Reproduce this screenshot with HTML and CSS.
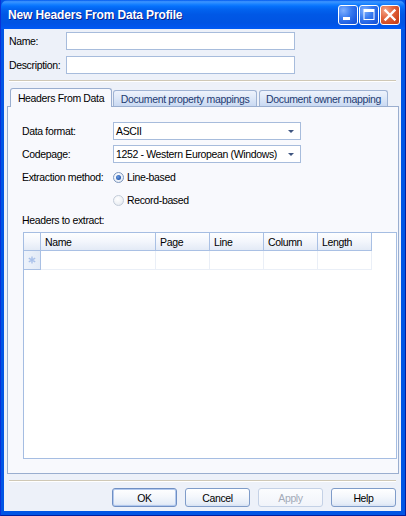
FILE: index.html
```html
<!DOCTYPE html>
<html>
<head>
<meta charset="utf-8">
<title>New Headers From Data Profile</title>
<link rel="stylesheet" href="styles.css">
</head>
<body>
<div class="window">
  <div class="titlebar">
    <span class="title">New Headers From Data Profile</span>
    <div class="caption-buttons">
      <span class="cbtn">
        <svg width="20" height="20" viewBox="0 0 20 20"><rect x="5" y="12" width="7" height="3" fill="#fff"/></svg>
      </span>
      <span class="cbtn">
        <svg width="20" height="20" viewBox="0 0 20 20"><rect x="5" y="4.5" width="10" height="10" fill="none" stroke="#fff" stroke-width="1"/><rect x="5" y="4" width="10" height="3" fill="#fff"/></svg>
      </span>
      <span class="cbtn close">
        <svg width="20" height="20" viewBox="0 0 20 20"><path d="M5.5 5.5 L14.5 14.5 M14.5 5.5 L5.5 14.5" stroke="#fff" stroke-width="2.4" stroke-linecap="square"/></svg>
      </span>
    </div>
  </div>
  <div class="client">
    <div class="fields">
      <div class="field-row"><span class="field-label">Name:</span><span class="textbox"></span></div>
      <div class="field-row"><span class="field-label">Description:</span><span class="textbox"></span></div>
    </div>
    <div class="separator"></div>
    <div class="tab-strip">
      <div class="tab active">Headers From Data</div>
      <div class="tab t2">Document property mappings</div>
      <div class="tab t3">Document owner mapping</div>
    </div>
    <div class="tab-panel">
      <div class="prop-row">
        <span class="prop-label">Data format:</span>
        <span class="combo"><span class="combo-text">ASCII</span><span class="combo-arrow"></span></span>
      </div>
      <div class="prop-row">
        <span class="prop-label">Codepage:</span>
        <span class="combo"><span class="combo-text">1252 - Western European (Windows)</span><span class="combo-arrow"></span></span>
      </div>
      <div class="prop-row">
        <span class="prop-label">Extraction method:</span>
        <span class="radio checked"></span><span class="radio-text">Line-based</span>
      </div>
      <div class="prop-row">
        <span class="prop-label"></span>
        <span class="radio"></span><span class="radio-text">Record-based</span>
      </div>
      <div class="section-label">Headers to extract:</div>
      <div class="datagrid">
        <div class="grid-row header">
          <div class="cell rowhead"></div>
          <div class="cell">Name</div>
          <div class="cell">Page</div>
          <div class="cell">Line</div>
          <div class="cell">Column</div>
          <div class="cell">Length</div>
          <div class="cell last"></div>
        </div>
        <div class="grid-row newrow">
          <div class="cell rowhead">
            <svg width="8" height="8" viewBox="0 0 8 8"><path d="M4 0.5 V7.5 M0.8 2.2 L7.2 5.8 M7.2 2.2 L0.8 5.8" stroke="#a9c1ea" stroke-width="1.4"/></svg>
          </div>
          <div class="cell"></div>
          <div class="cell"></div>
          <div class="cell"></div>
          <div class="cell"></div>
          <div class="cell"></div>
          <div class="cell empty"></div>
        </div>
      </div>
    </div>
    <div class="separator lower"></div>
    <div class="buttons">
      <span class="btn default">OK</span>
      <span class="btn">Cancel</span>
      <span class="btn disabled">Apply</span>
      <span class="btn">Help</span>
    </div>
  </div>
</div>
</body>
</html>
```
FILE: styles.css
```css
* { box-sizing: border-box; }

html, body {
  margin: 0;
  padding: 0;
  background: #ffffff;
}

body {
  font-family: "Liberation Sans", Arial, sans-serif;
  font-size: 10.5px;
  letter-spacing: -0.35px;
  color: #000;
}

.window {
  width: 406px;
  height: 516px;
  background: #0055e5;
  border-left: 1px solid #0831d9;
  border-right: 1px solid #001ea0;
  border-bottom: 1px solid #001ea0;
  display: flex;
  flex-direction: column;
  padding: 0 4px 4px 3px;
}

.titlebar {
  height: 29px;
  margin: 0 -4px 0 -3px;
  padding: 0 5px 0 7px;
  display: flex;
  align-items: center;
  justify-content: space-between;
  border-radius: 7px 7px 0 0;
  background: linear-gradient(to bottom,
    #0058ee 0%, #3d95ff 6%, #2b8dff 10%, #137dff 16%, #0570fb 22%,
    #0263ef 32%, #0058e6 50%, #0054e3 78%, #0055eb 90%, #005bf5 100%);
}

.title {
  color: #fff;
  font-weight: bold;
  font-size: 12px;
  letter-spacing: -0.15px;
  text-shadow: 1px 1px 0 #0a1e8a;
  padding-top: 1px;
}

.caption-buttons {
  display: flex;
  gap: 1px;
  padding-top: 1px;
}

.cbtn {
  width: 20px;
  height: 20px;
  border: 1px solid #fff;
  border-radius: 3px;
  display: block;
  position: relative;
  overflow: hidden;
  background: radial-gradient(circle at 25% 25%, #7fb0ff 0%, #3a7cf0 40%, #1e5de0 75%, #1450d0 100%);
}

.cbtn svg {
  position: absolute;
  left: -1px;
  top: -1px;
}

.cbtn.close {
  background: radial-gradient(circle at 25% 25%, #f4a68a 0%, #e2663f 40%, #d0471f 75%, #c03a14 100%);
}

.client {
  flex: 1;
  background: #edf1f9;
  display: flex;
  flex-direction: column;
}

.fields {
  display: flex;
  flex-direction: column;
  gap: 6px;
  padding: 3px 0 0 5px;
}

.field-row {
  display: flex;
  align-items: center;
  height: 18px;
}

.field-label {
  width: 57px;
}

.textbox {
  width: 229px;
  height: 18px;
  background: #fff;
  border: 1px solid #a7bcdc;
}

.separator {
  margin: 6px 5px 0 5px;
  height: 2px;
  border-top: 1px solid #cfc8b6;
  border-bottom: 1px solid #ffffff;
}

.tab-strip {
  display: flex;
  align-items: flex-end;
  height: 18px;
  margin-top: 6px;
  padding-left: 6px;
  position: relative;
  z-index: 1;
}

.tab {
  height: 16px;
  border: 1px solid #9fb3d3;
  border-bottom: none;
  border-radius: 3px 3px 0 0;
  background: linear-gradient(to bottom, #eef3fc 0%, #dbe6f7 55%, #c9d9f2 100%);
  color: #1e3b72;
  display: flex;
  align-items: center;
  justify-content: center;
  padding-top: 1px;
}

.tab.active {
  width: 102px;
  height: 19px;
  margin-bottom: -1px;
  background: #f8f9fd;
  color: #000;
  border-color: #9aaecf;
  padding-top: 0;
  padding-bottom: 1px;
}

.tab.t2 {
  width: 144px;
  margin-left: 1px;
}

.tab.t3 {
  width: 129px;
  margin-left: 2px;
}

.tab-panel {
  margin: 0 2px 0 3px;
  height: 368px;
  background: #f8f9fd;
  border: 1px solid #9aaecf;
  display: flex;
  flex-direction: column;
  padding: 15px 1px 14px 14px;
}

.prop-row {
  display: flex;
  align-items: center;
  height: 18px;
  margin-bottom: 5px;
}

.prop-label {
  width: 91px;
  flex: none;
}

.combo {
  width: 188px;
  height: 18px;
  background: #fff;
  border: 1px solid #a7bcdc;
  display: flex;
  align-items: center;
  justify-content: space-between;
  padding: 0 6px 0 2px;
}

.combo-arrow {
  width: 0;
  height: 0;
  border-left: 3px solid transparent;
  border-right: 3px solid transparent;
  border-top: 3px solid #3f5580;
  margin-top: 1px;
}

.radio {
  width: 11px;
  height: 11px;
  border-radius: 50%;
  border: 1px solid #c3ccd9;
  background: radial-gradient(circle at 40% 35%, #ffffff 0%, #eef1f5 60%, #d9dee6 100%);
  flex: none;
  position: relative;
}

.radio.checked {
  border-color: #7e97bd;
  background: radial-gradient(circle at 40% 35%, #ffffff 0%, #e8eef7 70%, #cfdaea 100%);
}

.radio.checked::after {
  content: "";
  position: absolute;
  left: 2px;
  top: 2px;
  width: 5px;
  height: 5px;
  border-radius: 50%;
  background: radial-gradient(circle at 40% 40%, #6c9be0 0%, #2e62b5 60%, #1d4a98 100%);
}

.radio-text {
  margin-left: 3px;
}

.section-label {
  height: 16px;
  line-height: 16px;
  margin-top: -2px;
}

.datagrid {
  flex: 1;
  margin-top: 4px;
  margin-left: 1px;
  background: #fff;
  border: 1px solid #a5bde2;
  display: flex;
  flex-direction: column;
}

.grid-row {
  display: grid;
  grid-template-columns: 17px 115px 54px 54px 54px 54px 1fr;
}

.cell {
  border-right: 1px solid #a9c0e4;
  display: flex;
  align-items: center;
  padding-left: 4px;
}

.cell.last {
  border-right: none;
}

.header .cell {
  height: 18px;
  border-bottom: 1px solid #a9c0e4;
  background: linear-gradient(to bottom, #fdfeff 0%, #f3f6fc 50%, #e3eaf6 100%);
}

.header .cell.last {
  border-right: 1px solid #a9c0e4;
  border-bottom: none;
  background: #fff;
  border-right: none;
}

.newrow .cell {
  height: 19px;
  border-right: 1px solid #eaeff7;
  border-bottom: 1px solid #eaeff7;
}

.newrow .cell.rowhead {
  border-right: 1px solid #a9c0e4;
  border-bottom: 1px solid #a9c0e4;
  background: linear-gradient(to right, #eef3fb 0%, #e2eaf6 100%);
  justify-content: center;
  padding-left: 0;
}

.newrow .cell.empty {
  border: none;
}

.buttons {
  display: flex;
  justify-content: flex-end;
  gap: 8px;
  margin: 6px 5px 0 0;
}

.btn {
  width: 65px;
  height: 19px;
  border: 1px solid #7f9cc9;
  border-radius: 3px;
  background: linear-gradient(to bottom, #ffffff 0%, #f4f7fc 45%, #e6edf8 85%, #d7e2f3 100%);
  display: flex;
  align-items: center;
  justify-content: center;
  padding-top: 1px;
}

.btn.default {
  border-color: #6f8fc4;
  box-shadow: inset 0 0 0 1px #b3c9ee;
}

.btn.disabled {
  color: #a3aab8;
  border-color: #c4d1e6;
  background: linear-gradient(to bottom, #fbfcfe 0%, #f1f4fa 100%);
}
```
